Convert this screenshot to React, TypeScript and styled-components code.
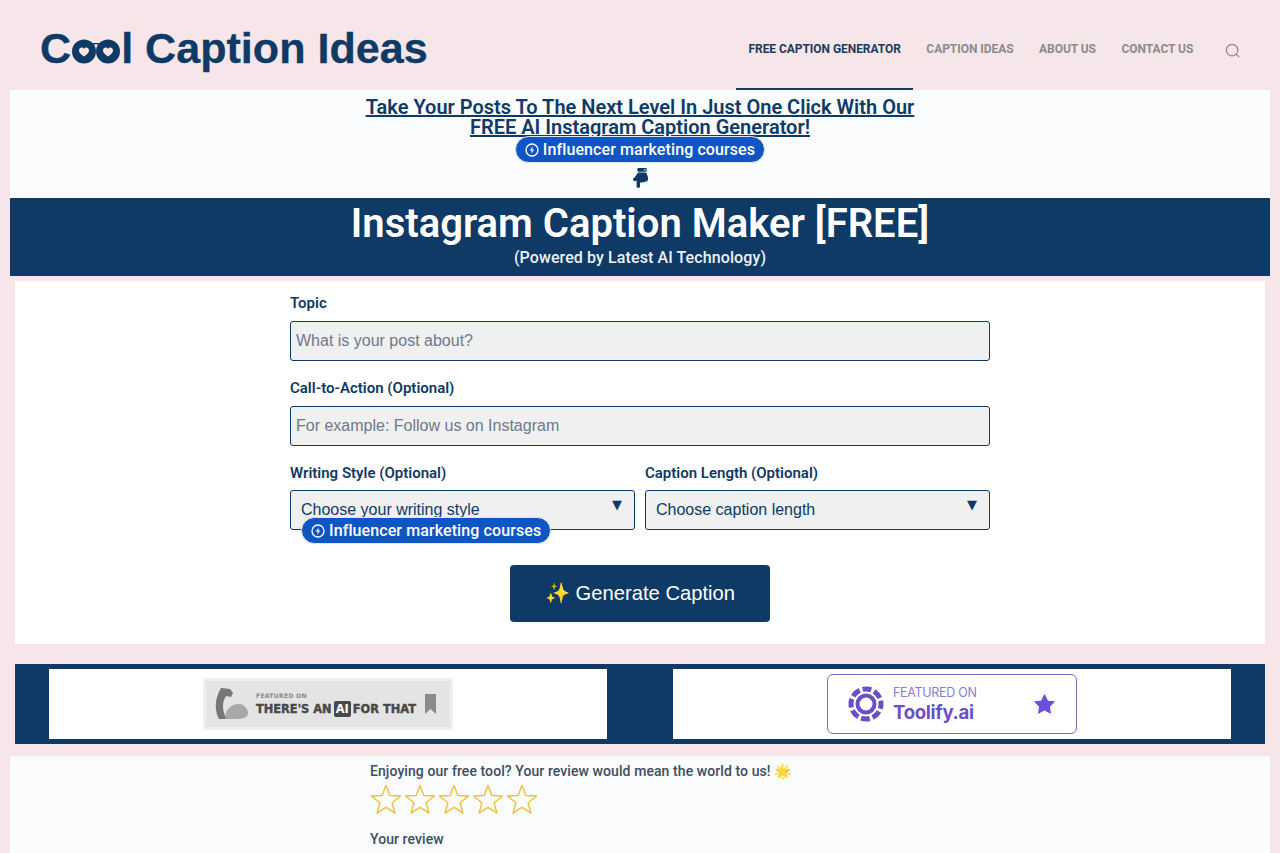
import React from "react";
import styled, { createGlobalStyle } from "styled-components";
import { FaHandPointDown } from "react-icons/fa";

const navy = "#0f3a65";

const Global = createGlobalStyle`
  html, body { margin: 0; padding: 0; height: 100%; overflow: hidden; }
  body { background: #f6e6ea; font-family: Roboto, "Liberation Sans", sans-serif; }
  #root { height: 100%; }
  * { box-sizing: border-box; }
`;

const Page = styled.div`
  display: flex; flex-direction: column; height: 853px; overflow: hidden; padding: 0 10px;
`;
const Header = styled.header`
  height: 90px; flex: none; display: flex; align-items: stretch; justify-content: space-between;
  margin: 0 -10px; padding: 0 40px;
`;
const Logo = styled.a`
  display: flex; align-items: baseline; height: 71px; padding-top: 26px;
  font: 700 43.1px/44px "Liberation Sans", sans-serif; color: ${navy};
  -webkit-text-stroke: 0.3px ${navy};
  white-space: pre;
`;
const LogoEyes = styled.svg`
  width: 48px; height: 25px; margin: 0 1px 0 1px; flex: none; position: relative; top: 1px;
`;
const Nav = styled.nav`
  display: flex; align-items: stretch;
`;
const NavItem = styled.a<{ $active?: boolean }>`
  display: flex; align-items: center; padding: 8px 12.5px 0; height: 90px; margin: 0 0.25px;
  font: 700 12px/1 Roboto, sans-serif; text-transform: uppercase; letter-spacing: -0.05px;
  color: ${(p) => (p.$active ? "#1d3a5e" : "#8c8a8c")};
  box-shadow: ${(p) => (p.$active ? "inset 0 -2px 0 #1d3a5e" : "none")};
`;
const SearchIcon = styled.svg`
  width: 15px; height: 15px; margin: 43px 0 0 19px; flex: none;
`;
const Promo = styled.section`
  flex: none; height: 108px; background: #f9fbfd; display: flex; flex-direction: column;
  align-items: center; padding-top: 7px;
`;
const PromoLink = styled.h2`
  margin: 0; width: 570px; text-align: center; font: 600 20px/20px Roboto, sans-serif;
  color: ${navy}; text-decoration: underline; height: 39px;
`;
const Chip = styled.a`
  display: inline-flex; align-items: center; gap: 4px; height: 27px; padding: 0 9px;
  background: #0f56c4; border: 1px solid #dbe6f6; border-radius: 14px; color: #fff;
  font: 500 16px/1 Roboto, sans-serif; letter-spacing: 0.1px; white-space: nowrap;
`;
const FloatingChip = styled(Chip)`
  position: absolute; left: 11px; top: 27px; z-index: 2;
`;
const HandIcon = styled(FaHandPointDown)`
  width: 17px; height: 20px; margin-top: 5px; color: ${navy};
`;
const Hero = styled.section`
  flex: none; height: 78px; background: ${navy}; text-align: center; color: #fff;
`;
const HeroTitle = styled.h1`
  margin: 0; padding-top: 2px; font: 600 40px/47px Roboto, sans-serif; color: #fff;
`;
const HeroSub = styled.p`
  margin: 0; padding-top: 1px; font: 500 16px/20px Roboto, sans-serif; color: #eef1f5; letter-spacing: 0.1px;
`;
const FormCard = styled.section`
  flex: none; height: 363px; margin: 5px 5px 20px; background: #fff; padding-top: 12px;
`;
const Form = styled.form`
  width: 700px; margin: 0 auto; display: flex; flex-direction: column; gap: 17px;
`;
const Field = styled.div<{ $tight?: boolean }>`
  display: flex; flex-direction: column; gap: ${(p) => (p.$tight ? "7px" : "8px")}; flex: 1; position: relative;
`;
const Label = styled.label`
  font: 600 15px/20px Roboto, sans-serif; color: ${navy};
`;
const Input = styled.input`
  height: 40px; width: 100%; padding: 0 5px; border: 1px solid ${navy}; border-radius: 3px;
  background: #f0f0f0; font: 400 16px "Liberation Sans", sans-serif; color: ${navy};
  &::placeholder { color: #6c7a8c; opacity: 1; }
`;
const SelectRow = styled.div`
  display: flex; gap: 10px;
`;
const SelectWrap = styled.div`
  position: relative; height: 40px;
`;
const Select = styled.select`
  appearance: none; width: 100%; height: 40px; padding: 0 10px 2px; border: 1px solid ${navy}; border-radius: 3px;
  background: #f0f0f0; font: 400 16px "Liberation Sans", sans-serif; color: ${navy};
`;
const Arrow = styled.span`
  position: absolute; right: 13px; top: 7px; font: 400 13px/16px "DejaVu Sans", sans-serif; color: ${navy};
`;
const GenerateRow = styled.div`
  display: flex; justify-content: center; padding-top: 18px;
`;
const GenerateButton = styled.button`
  width: 260px; height: 57px; border: 0; border-radius: 4px; background: ${navy}; color: #fff;
  padding: 0 0 2px; font: 400 20.2px "Liberation Sans", sans-serif;
`;
const Banner = styled.section`
  flex: none; height: 80px; margin: 0 5px 12px; background: ${navy}; display: flex;
  justify-content: space-between; padding: 5px 34px;
`;
const BannerCell = styled.a`
  width: 558px; height: 70px; background: #fff; display: flex;
  align-items: center; justify-content: center;
`;
const AiBadge = styled.div`
  width: 250px; height: 52px; background: #e4e4e4; border: 3px solid #f0f0f0; display: flex;
  align-items: center; padding: 0 14px 0 8px; color: #484848;
`;
const AiText = styled.div`
  flex: 1; margin-left: 6px; display: flex; flex-direction: column; gap: 1px;
`;
const AiSmall = styled.span`
  font: 700 6.2px/8px "DejaVu Sans", sans-serif; color: #8a8a8a; letter-spacing: 0.2px;
`;
const AiLarge = styled.span`
  display: flex; align-items: center; font: 700 11.4px/16px "DejaVu Sans", sans-serif; white-space: nowrap;
  -webkit-text-stroke: 0.4px #484848;
`;
const AiTag = styled.span`
  background: #484848; color: #fff; border-radius: 2px; padding: 0 2px; margin: 0 2px;
  -webkit-text-stroke: 0;
`;
const ToolifyBadge = styled.div`
  width: 250px; height: 60px; border: 1px solid #7c68bd; border-radius: 6px; background: #fff;
  display: flex; align-items: center; padding: 0 21px 0 20px;
`;
const ToolifyText = styled.div`
  flex: 1; margin-left: 9px; display: flex; flex-direction: column;
`;
const ToolifySmall = styled.span`
  font: 400 12.5px/15px "Inter", sans-serif; color: #8b7bd0; letter-spacing: -0.3px;
`;
const ToolifyLarge = styled.span`
  font: 700 18.6px/24px "Inter", sans-serif; color: #6b4fc8; letter-spacing: -0.3px;
`;
const Review = styled.section`
  flex: 1; background: #f9fbfd; padding: 5px 0 0 360px; color: #3f4d60;
`;
const ReviewLead = styled.p`
  margin: 0; font: 500 14px/20px Roboto, sans-serif; letter-spacing: 0.08px;
`;
const Stars = styled.div`
  display: flex; gap: 2px; height: 32px; margin-top: 2px;
`;
const Star = styled.svg`
  width: 32px; height: 32px; flex: none;
`;
const ReviewLabel = styled.label`
  display: block; margin-top: 14px; font: 500 14px/20px Roboto, sans-serif; letter-spacing: 0.07px;
`;

const Bolt = () => (
  <svg width="14" height="14" viewBox="0 0 14 14" fill="none">
    <circle cx="7" cy="7" r="6" stroke="#fff" strokeWidth="1.3" />
    <path d="M7.8 3.2 4.8 7.6h2l-.6 3.2 3-4.4h-2z" fill="#fff" />
  </svg>
);

const Heart = ({ x }: { x: number }) => (
  <path
    transform={`translate(${x} 9)`}
    d="M0 8.5C-4.2 5.4-5 3.8-5 2.4-5 .6-3.6-.4-2.3-.4-1.2-.4-.4.2 0 1 .4.2 1.2-.4 2.3-.4 3.6-.4 5 .6 5 2.4 5 3.8 4.2 5.4 0 8.5Z"
    fill="#f6e6ea"
  />
);

const StarShape = () => (
  <Star viewBox="0 0 32 32" fill="none">
    <path
      d="M16 2.500l3.800 10 10.700.5-8.400 6.800 2.900 10.400L16 24.300 7 30.200l2.900-10.400-8.400-6.800 10.700-.5z"
      stroke="#efc040"
      strokeWidth="1.4"
      strokeLinejoin="round"
    />
  </Star>
);

const ToolifyMark = () => (
  <svg width="36" height="36" viewBox="0 0 36 36" fill="none" stroke="#6b4fc8">
    <circle cx="18" cy="18" r="8.500" strokeWidth="4" />
    <circle cx="18" cy="18" r="15" strokeWidth="5" strokeDasharray="8.800 3" strokeDashoffset="4" />
  </svg>
);

const Arm = () => (
  <svg width="36" height="36" viewBox="0 0 36 36">
    <path d="M7 2l9 1 3 4-2 4-5-1-2 4c-2 6-1 13 3 19H5C0 24 1 12 7 2Z" fill="#777" />
    <path d="M12 33c-2-8 4-15 13-15 5 0 9 5 9 9 0 4-5 6-11 6H12Z" fill="#a8a8a8" />
  </svg>
);

export default function App() {
  return (
    <>
      <Global />
      <Page>
        <Header>
          <Logo>
            C
            <LogoEyes viewBox="0 0 48 25">
              <rect x="20" y="4" width="8" height="1.4" fill={navy} />
              <circle cx="12" cy="12.500" r="12" fill={navy} />
              <circle cx="36" cy="12.500" r="12" fill={navy} />
              <Heart x={12} />
              <Heart x={36} />
            </LogoEyes>
            l Caption Ideas
          </Logo>
          <Nav>
            <NavItem $active>Free Caption Generator</NavItem>
            <NavItem>Caption Ideas</NavItem>
            <NavItem>About Us</NavItem>
            <NavItem>Contact Us</NavItem>
            <SearchIcon viewBox="0 0 17 17" fill="none" stroke="#8c8a8c" strokeWidth="1.4">
              <circle cx="8" cy="8" r="6.500" />
              <path d="M12.600 12.600 16 16" />
            </SearchIcon>
          </Nav>
        </Header>
        <Promo>
          <PromoLink>Take Your Posts To The Next Level In Just One Click With Our FREE AI Instagram Caption Generator!</PromoLink>
          <Chip>
            <Bolt />
            Influencer marketing courses
          </Chip>
          <HandIcon />
        </Promo>
        <Hero>
          <HeroTitle>Instagram Caption Maker [FREE]</HeroTitle>
          <HeroSub>(Powered by Latest AI Technology)</HeroSub>
        </Hero>
        <FormCard>
          <Form>
            <Field>
              <Label>Topic</Label>
              <Input placeholder="What is your post about?" />
            </Field>
            <Field>
              <Label>Call-to-Action (Optional)</Label>
              <Input placeholder="For example: Follow us on Instagram" />
            </Field>
            <SelectRow>
              <Field $tight>
                <Label>Writing Style (Optional)</Label>
                <SelectWrap>
                  <Select><option>Choose your writing style</option></Select>
                  <Arrow>▼</Arrow>
                  <FloatingChip>
                    <Bolt />
                    Influencer marketing courses
                  </FloatingChip>
                </SelectWrap>
              </Field>
              <Field $tight>
                <Label>Caption Length (Optional)</Label>
                <SelectWrap>
                  <Select><option>Choose caption length</option></Select>
                  <Arrow>▼</Arrow>
                </SelectWrap>
              </Field>
            </SelectRow>
            <GenerateRow>
              <GenerateButton type="button">✨ Generate Caption</GenerateButton>
            </GenerateRow>
          </Form>
        </FormCard>
        <Banner>
          <BannerCell>
            <AiBadge>
              <Arm />
              <AiText>
                <AiSmall>FEATURED ON</AiSmall>
                <AiLarge>THERE'S AN<AiTag>AI</AiTag>FOR THAT</AiLarge>
              </AiText>
              <svg width="11" height="20" viewBox="0 0 11 20"><path d="M0 0h11v20l-5.500-5L0 20Z" fill="#8a8a8a" /></svg>
            </AiBadge>
          </BannerCell>
          <BannerCell>
            <ToolifyBadge>
              <ToolifyMark />
              <ToolifyText>
                <ToolifySmall>FEATURED ON</ToolifySmall>
                <ToolifyLarge>Toolify.ai</ToolifyLarge>
              </ToolifyText>
              <svg width="21" height="20" viewBox="0 0 21 20"><path d="M10.500 1l2.900 6 6.600.9-4.800 4.600 1.200 6.500-5.900-3.200L4.600 19l1.200-6.500L1 7.900 7.600 7z" fill="#6b4fdc" stroke="#6b4fdc" strokeWidth="1.200" strokeLinejoin="round" /></svg>
            </ToolifyBadge>
          </BannerCell>
        </Banner>
        <Review>
          <ReviewLead>Enjoying our free tool? Your review would mean the world to us! 🌟</ReviewLead>
          <Stars>
            <StarShape /><StarShape /><StarShape /><StarShape /><StarShape />
          </Stars>
          <ReviewLabel>Your review</ReviewLabel>
        </Review>
      </Page>
    </>
  );
}
